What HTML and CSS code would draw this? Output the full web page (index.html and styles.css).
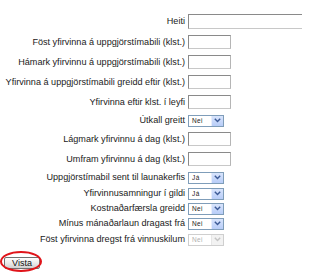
FILE: index.html
```html
<!DOCTYPE html>
<html lang="is">
<head>
<meta charset="utf-8">
<link rel="stylesheet" href="styles.css">
</head>
<body>
<form class="form">
  <div class="grid">
    <label class="lbl">Heiti</label>
    <div class="fld"><input class="txt wide" type="text"></div>

    <label class="lbl">Föst yfirvinna á uppgjörstímabili (klst.)</label>
    <div class="fld"><input class="txt" type="text"></div>

    <label class="lbl">Hámark yfirvinnu á uppgjörstímabili (klst.)</label>
    <div class="fld"><input class="txt" type="text"></div>

    <label class="lbl">Yfirvinna á uppgjörstímabili greidd eftir (klst.)</label>
    <div class="fld"><input class="txt" type="text"></div>

    <label class="lbl">Yfirvinna eftir klst. í leyfi</label>
    <div class="fld"><input class="txt" type="text"></div>

    <label class="lbl">Útkall greitt</label>
    <div class="fld"><span class="sel"><span class="val">Nei</span><span class="btn"><svg width="7" height="5" viewBox="0 0 7 5"><path d="M0.8 0.8 L3.5 3.6 L6.2 0.8" fill="none" stroke="#3c5a96" stroke-width="1.4"/></svg></span></span></div>

    <label class="lbl">Lágmark yfirvinnu á dag (klst.)</label>
    <div class="fld"><input class="txt" type="text"></div>

    <label class="lbl">Umfram yfirvinnu á dag (klst.)</label>
    <div class="fld"><input class="txt" type="text"></div>

    <label class="lbl">Uppgjörstímabil sent til launakerfis</label>
    <div class="fld"><span class="sel"><span class="val">Já</span><span class="btn"><svg width="7" height="5" viewBox="0 0 7 5"><path d="M0.8 0.8 L3.5 3.6 L6.2 0.8" fill="none" stroke="#3c5a96" stroke-width="1.4"/></svg></span></span></div>

    <label class="lbl">Yfirvinnusamningur í gildi</label>
    <div class="fld"><span class="sel"><span class="val">Já</span><span class="btn"><svg width="7" height="5" viewBox="0 0 7 5"><path d="M0.8 0.8 L3.5 3.6 L6.2 0.8" fill="none" stroke="#3c5a96" stroke-width="1.4"/></svg></span></span></div>

    <label class="lbl">Kostnaðarfærsla greidd</label>
    <div class="fld"><span class="sel"><span class="val">Nei</span><span class="btn"><svg width="7" height="5" viewBox="0 0 7 5"><path d="M0.8 0.8 L3.5 3.6 L6.2 0.8" fill="none" stroke="#3c5a96" stroke-width="1.4"/></svg></span></span></div>

    <label class="lbl">Mínus mánaðarlaun dragast frá</label>
    <div class="fld"><span class="sel"><span class="val">Nei</span><span class="btn"><svg width="7" height="5" viewBox="0 0 7 5"><path d="M0.8 0.8 L3.5 3.6 L6.2 0.8" fill="none" stroke="#3c5a96" stroke-width="1.4"/></svg></span></span></div>

    <label class="lbl">Föst yfirvinna dregst frá vinnuskilum</label>
    <div class="fld"><span class="sel disabled"><span class="val">Nei</span><span class="btn"><svg width="7" height="5" viewBox="0 0 7 5"><path d="M0.8 0.8 L3.5 3.6 L6.2 0.8" fill="none" stroke="#c4c4c4" stroke-width="1.4"/></svg></span></span></div>
  </div>
  <div class="actions">
    <span class="mark"><button class="vista" type="button">Vista</button></span>
  </div>
</form>
</body>
</html>
```

FILE: styles.css
```css
html, body {
  margin: 0;
  padding: 0;
  background: #fff;
  overflow: hidden;
}
body {
  width: 302px;
  height: 273px;
  font-family: "Liberation Sans", Arial, sans-serif;
  font-size: 9.1px;
  color: #1a1a1a;
}
.form {
  margin: 0;
  padding-top: 10px;
}
.grid {
  display: grid;
  grid-template-columns: 185px 130px;
  grid-template-rows: 22px 20px 20px 20px 20px 17px 20px 20px 17px 15px 15px 15px 17px;
  column-gap: 3px;
  align-items: center;
}
.lbl {
  text-align: right;
  white-space: nowrap;
  line-height: 11px;
}
.fld {
  display: flex;
  align-items: center;
}
.txt {
  box-sizing: border-box;
  width: 43px;
  height: 14px;
  margin: 0;
  padding: 0 2px;
  border: 1px solid #8a8a8a;
  border-right-color: #b5b5b5;
  border-bottom-color: #c8c8c8;
  background: #fff;
  font: inherit;
}
.txt.wide {
  width: 130px;
  height: 15px;
}
.sel {
  box-sizing: border-box;
  display: flex;
  align-items: stretch;
  width: 36px;
  height: 12px;
  border: 1px solid #7f9db9;
  background: #fff;
}
.val {
  flex: 1;
  font-size: 6.5px;
  line-height: 10px;
  padding-left: 3px;
  color: #222;
  letter-spacing: 0.4px;
}
.btn {
  width: 11px;
  display: flex;
  align-items: center;
  justify-content: center;
  background: linear-gradient(#d8e4fc, #b8cdf8);
  border-left: 1px solid #e8eefc;
}
.sel.disabled {
  border-color: #cfcfcf;
}
.sel.disabled .val {
  color: #b0b0b0;
}
.sel.disabled .btn {
  background: #f2f2f2;
  border-left-color: #e6e6e6;
}
.actions {
  padding: 9px 0 0 4px;
}
.mark {
  position: relative;
  display: block;
  width: 36px;
  height: 12px;
}
.mark::after {
  content: "";
  position: absolute;
  left: -4px;
  top: -6px;
  width: 38px;
  height: 17px;
  border: 2px solid #e0141a;
  border-radius: 50%;
}
.vista {
  display: block;
  box-sizing: border-box;
  width: 36px;
  height: 12px;
  margin: 0;
  padding: 0;
  border: 1px solid #707070;
  border-radius: 2px;
  background: linear-gradient(#ffffff, #e6e6e6 60%, #cfcfcf);
  font-family: "Liberation Sans", Arial, sans-serif;
  font-size: 9px;
  line-height: 10px;
  color: #111;
}
```
